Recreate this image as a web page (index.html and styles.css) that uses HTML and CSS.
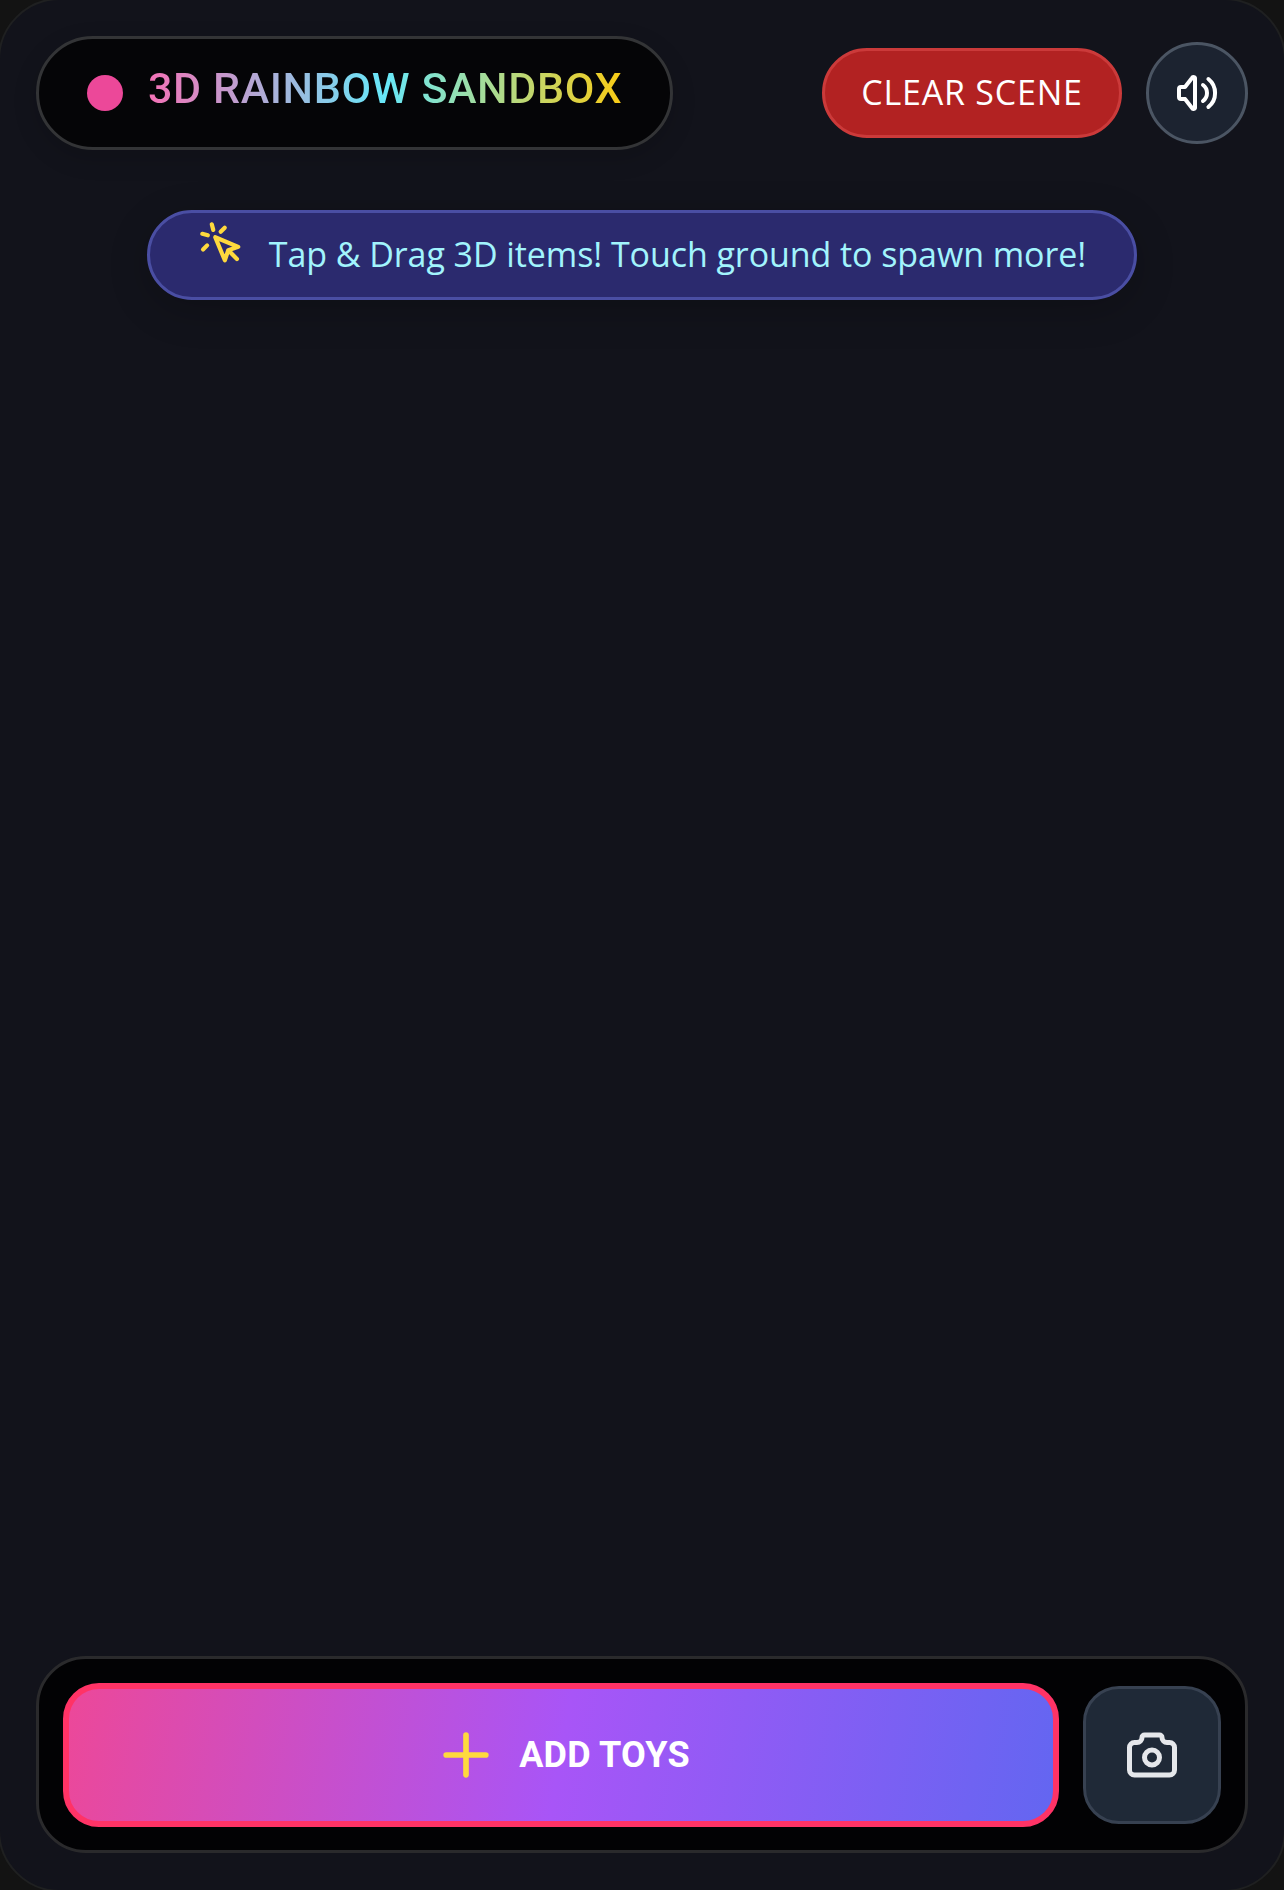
FILE: index.html
```html
<!DOCTYPE html>
<html lang="en">
<head>
<meta charset="utf-8">
<title>3D Rainbow Sandbox</title>
<link rel="stylesheet" href="styles.css">
</head>
<body>
<main class="frame">
  <header class="topbar">
    <div class="title-pill">
      <span class="dot"></span>
      <h1 class="title">3D RAINBOW SANDBOX</h1>
    </div>
    <div class="actions">
      <button class="clear-btn"><span class="clear-label">CLEAR SCENE</span></button>
      <button class="sound-btn" aria-label="Sound">
        <svg class="icon-sound" viewBox="0 0 24 24" fill="none" stroke="currentColor" stroke-width="2" stroke-linecap="round" stroke-linejoin="round"><path d="M15 8a5 5 0 0 1 0 8"/><path d="M17.7 5a9 9 0 0 1 0 14"/><path d="M6 15h-2a1 1 0 0 1 -1 -1v-4a1 1 0 0 1 1 -1h2l3.5 -4.5a.8 .8 0 0 1 1.5 .5v14a.8 .8 0 0 1 -1.5 .5l-3.5 -4.5"/></svg>
      </button>
    </div>
  </header>

  <div class="hint">
    <svg class="icon-click" viewBox="0 0 24 24" fill="none" stroke="currentColor" stroke-width="2.2" stroke-linecap="round" stroke-linejoin="round"><path d="m9 9 5 12 1.774-5.226L21 14 9 9z"/><path d="m16.071 16.071 4.243 4.243"/><path d="m7.188 2.239.777 2.897M5.136 7.965l-2.898-.777M13.95 4.05l-2.122 2.122m-7.07 7.071-2.121 2.121"/></svg>
    <span class="hint-text">Tap &amp; Drag 3D items! Touch ground to spawn more!</span>
  </div>

  <div class="spacer"></div>

  <footer class="dock">
    <button class="add-btn">
      <svg class="icon-plus" viewBox="0 0 24 24" fill="none" stroke="currentColor" stroke-width="2" stroke-linecap="round" stroke-linejoin="round"><path d="M12 5v14"/><path d="M5 12h14"/></svg>
      <span class="add-label">ADD TOYS</span>
    </button>
    <button class="camera-btn" aria-label="Camera">
      <svg class="icon-camera" viewBox="0 0 24 24" fill="none" stroke="currentColor" stroke-width="2" stroke-linecap="round" stroke-linejoin="round"><path d="M5 7h1a2 2 0 0 0 2 -2a1 1 0 0 1 1 -1h6a1 1 0 0 1 1 1a2 2 0 0 0 2 2h1a2 2 0 0 1 2 2v9a2 2 0 0 1 -2 2h-14a2 2 0 0 1 -2 -2v-9a2 2 0 0 1 2 -2"/><circle cx="12" cy="13" r="3"/></svg>
    </button>
  </footer>
</main>
</body>
</html>
```
FILE: styles.css
```css
* { box-sizing: border-box; }
html, body { margin: 0; height: 100%; overflow: hidden; }
body {
  background: #131313;
  font-family: "Open Sans", "Liberation Sans", sans-serif;
}
button { font: inherit; cursor: pointer; padding: 0; }

.frame {
  width: 1288px;
  height: 1894px;
  margin: -2px;
  display: flex;
  flex-direction: column;
  padding: 36px;
  background: #12131b;
  border: 2px solid #1f2021;
  border-radius: 62px;
  overflow: hidden;
}

.topbar {
  display: flex;
  align-items: center;
  justify-content: space-between;
}
.title-pill {
  display: flex;
  align-items: center;
  gap: 25px;
  height: 114px;
  padding: 0 48px;
  background: #050507;
  border: 3px solid #333436;
  border-radius: 57px;
  box-shadow: 0 8px 24px rgba(0, 0, 0, .15);
}
.dot {
  width: 36px;
  height: 36px;
  border-radius: 50%;
  background: #ec4899;
}
.title {
  margin: 0 0 10px;
  font-family: Roboto, "Open Sans", sans-serif;
  font-size: 43px;
  font-weight: 500;
  letter-spacing: .6px;
  line-height: 1;
  white-space: nowrap;
  color: transparent;
  background: linear-gradient(to right, #f472b6, #67e8f9, #facc15);
  -webkit-background-clip: text;
  background-clip: text;
}

.actions {
  display: flex;
  align-items: center;
  gap: 24px;
}
.clear-btn {
  width: 300px;
  height: 90px;
  background: #b22222;
  border: 3px solid #cb3a3a;
  border-radius: 45px;
  color: #fff;
  font-size: 34px;
  letter-spacing: .8px;
  white-space: nowrap;
}
.clear-label { display: block; padding-bottom: 2px; }
.sound-btn {
  display: flex;
  align-items: center;
  justify-content: center;
  width: 102px;
  height: 102px;
  background: #1c2330;
  border: 3px solid #4b5563;
  border-radius: 50%;
  color: #fff;
}
.icon-sound { width: 48px; height: 48px; }

.hint {
  display: flex;
  align-items: flex-start;
  gap: 25px;
  align-self: center;
  margin-top: 60px;
  height: 90px;
  padding: 7px 48px;
  background: #2b2a6e;
  border: 3px solid #4a4ea3;
  border-radius: 45px;
  box-shadow: 0 10px 40px rgba(0, 0, 0, .2);
  color: #a2f4fd;
}
.icon-click { flex: none; width: 46px; height: 46px; color: #ffd93d; }
.hint-text {
  font-size: 34px;
  letter-spacing: -.08px;
  line-height: 68px;
  white-space: nowrap;
}

.spacer { flex: 1; }

.dock {
  display: flex;
  align-items: center;
  gap: 24px;
  height: 197px;
  margin-bottom: 1px;
  padding: 0 24px;
  background: #020204;
  border: 3px solid #2a2a2c;
  border-radius: 50px;
}
.add-btn {
  display: flex;
  align-items: center;
  justify-content: center;
  gap: 19px;
  flex: 1;
  height: 144px;
  background: linear-gradient(100deg, #ec4899, #a855f7, #6366f1);
  border: 6px solid #ff3366;
  border-radius: 36px;
  color: #fff;
}
.add-label {
  font-family: Roboto, "Open Sans", sans-serif;
  font-size: 36px;
  font-weight: 700;
  letter-spacing: .2px;
}
.icon-plus { width: 68px; height: 68px; color: #ffd93d; }
.camera-btn {
  display: flex;
  align-items: center;
  justify-content: center;
  flex: none;
  width: 138px;
  height: 138px;
  background: #1f2937;
  border: 3px solid #374151;
  border-radius: 36px;
  color: #e5e7eb;
}
.icon-camera { width: 60px; height: 60px; }
```
